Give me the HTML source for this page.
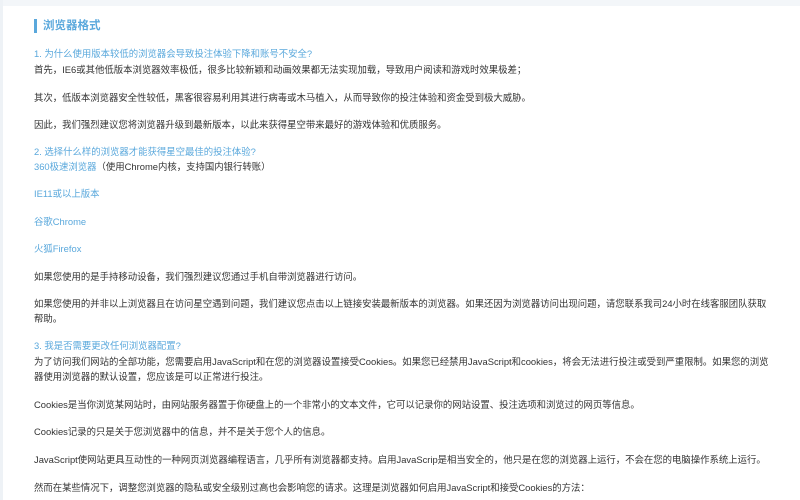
<!DOCTYPE html>
<html><head><meta charset="utf-8"><style>
html,body{margin:0;padding:0;width:800px;height:500px;overflow:hidden;background:#fff;}
body{font-family:"Liberation Sans","Noto Sans CJK SC",sans-serif;font-size:9.4px;color:#333;position:relative;}
.topband{position:absolute;left:0;top:0;width:800px;height:6px;background:#f3f6f9;}
.leftband{position:absolute;left:0;top:0;width:3px;height:500px;background:#eef2f6;}
.l{position:absolute;left:34px;white-space:nowrap;line-height:14px;margin-top:1px;}
.b{color:#5aa8dc;}
.t{position:absolute;left:34px;top:19px;height:14px;border-left:3px solid #5aa8dc;padding-left:6px;color:#5aa8dc;font-size:11.5px;line-height:14px;font-weight:bold;}
</style></head><body>
<div class="topband"></div><div class="leftband"></div>
<div class="t">浏览器格式</div>
<div class="l b" style="top:46px">1. 为什么使用版本较低的浏览器会导致投注体验下降和账号不安全?</div>
<div class="l" style="top:62px">首先，IE6或其他低版本浏览器效率极低，很多比较新颖和动画效果都无法实现加载，导致用户阅读和游戏时效果极差；</div>
<div class="l" style="top:90px">其次，低版本浏览器安全性较低，黑客很容易利用其进行病毒或木马植入，从而导致你的投注体验和资金受到极大威胁。</div>
<div class="l" style="top:117px">因此，我们强烈建议您将浏览器升级到最新版本，以此来获得星空带来最好的游戏体验和优质服务。</div>
<div class="l b" style="top:144px">2. 选择什么样的浏览器才能获得星空最佳的投注体验?</div>
<div class="l" style="top:159px"><span class="b">360极速浏览器</span>（使用Chrome内核，支持国内银行转账）</div>
<div class="l b" style="top:186px">IE11或以上版本</div>
<div class="l b" style="top:214px">谷歌Chrome</div>
<div class="l b" style="top:241px">火狐Firefox</div>
<div class="l" style="top:269px">如果您使用的是手持移动设备，我们强烈建议您通过手机自带浏览器进行访问。</div>
<div class="l" style="top:296px">如果您使用的并非以上浏览器且在访问星空遇到问题，我们建议您点击以上链接安装最新版本的浏览器。如果还因为浏览器访问出现问题，请您联系我司24小时在线客服团队获取</div>
<div class="l" style="top:311px">帮助。</div>
<div class="l b" style="top:338px">3. 我是否需要更改任何浏览器配置?</div>
<div class="l" style="top:354px">为了访问我们网站的全部功能，您需要启用JavaScript和在您的浏览器设置接受Cookies。如果您已经禁用JavaScript和cookies，将会无法进行投注或受到严重限制。如果您的浏览</div>
<div class="l" style="top:369px">器使用浏览器的默认设置，您应该是可以正常进行投注。</div>
<div class="l" style="top:397px">Cookies是当你浏览某网站时，由网站服务器置于你硬盘上的一个非常小的文本文件，它可以记录你的网站设置、投注选项和浏览过的网页等信息。</div>
<div class="l" style="top:424px">Cookies记录的只是关于您浏览器中的信息，并不是关于您个人的信息。</div>
<div class="l" style="top:452px">JavaScript使网站更具互动性的一种网页浏览器编程语言，几乎所有浏览器都支持。启用JavaScrip是相当安全的，他只是在您的浏览器上运行，不会在您的电脑操作系统上运行。</div>
<div class="l" style="top:480px">然而在某些情况下，调整您浏览器的隐私或安全级别过高也会影响您的请求。这理是浏览器如何启用JavaScript和接受Cookies的方法：</div>
</body></html>
